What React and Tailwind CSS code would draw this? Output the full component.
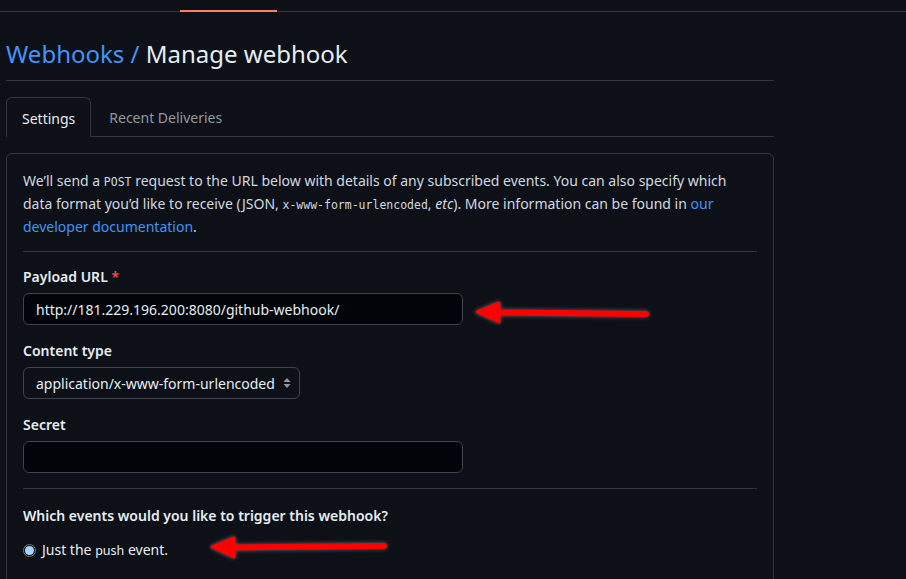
import React from 'react'

const font = { fontFamily: '"Noto Sans", "Liberation Sans", sans-serif' }
const mono = { fontFamily: '"DejaVu Sans Mono", monospace' }

function Arrow ({ x1, y1, x2, y2 }) {
  // tip at (x1,y1), tail at (x2,y2)
  const left = Math.min(x1, x2) - 14
  const top = Math.min(y1, y2) - 18
  const w = Math.abs(x2 - x1) + 28
  const h = Math.abs(y2 - y1) + 36
  const tx = x1 - left
  const ty = y1 - top
  const ex = x2 - left
  const ey = y2 - top
  return (
    <svg
      className="pointer-events-none absolute drop-shadow-[0_0_2px_rgba(255,255,255,0.35)]"
      style={{ left, top }}
      width={w}
      height={h}
    >
      <line x1={tx + 18} y1={ty + 0.5} x2={ex} y2={ey} stroke="#ff0000" strokeWidth="6" strokeLinecap="round" />
      <path
        d={`M${tx} ${ty} L${tx + 22} ${ty - 9} L${tx + 22} ${ty + 10} Z`}
        fill="#ff0000"
        stroke="#ff0000"
        strokeWidth="3"
        strokeLinejoin="round"
      />
    </svg>
  )
}

export default function App () {
  return (
    <div className="relative min-h-[579px] w-[906px] overflow-hidden bg-[#0d1117] text-[#e6edf3]" style={font}>
      <div className="relative h-[12px] border-b border-[#30363d]">
        <div className="absolute bottom-[-1px] left-[180px] h-[2px] w-[97px] bg-[#f78166]" />
      </div>

      <div className="w-[774px] pl-[6px]">
        <h1 className="mt-[26px] border-b border-[#30363d] pb-[10px] text-[24px] leading-[32px]">
          <span className="text-[#4493f8]">Webhooks /</span> Manage webhook
        </h1>

        <div className="mt-[16px] flex border-b border-[#30363d] text-[14px]">
          <div className="mb-[-1px] rounded-t-md border border-b-0 border-[#30363d] bg-[#0d1117] px-[15px] pt-[10px] pb-[7px] leading-[22px] text-[#e6edf3]">
            Settings
          </div>
          <div className="px-[18px] pt-[10px] pb-[7px] leading-[22px] text-[#9198a1]">Recent Deliveries</div>
        </div>

        <div className="mt-[16px] rounded-md border border-[#30363d] px-[16px] pt-[16px] pb-[20px] text-[14px]">
          <p className="border-b border-[#30363d] pb-[13px] leading-[22px] text-[#d1d7e0]">
            We’ll send a <code className="text-[11.5px]" style={mono}>POST</code> request to the URL below with details of any subscribed events. You can also specify which data format you’d like to receive (JSON, <code className="text-[11.5px]" style={mono}>x-www-form-urlencoded</code>, <em>etc</em>). More information can be found in <span className="text-[#4493f8]">our developer documentation</span>.
          </p>

          <div className="mt-[14px]">
            <label className="block text-[14px] font-semibold leading-[22px] text-[#e6edf3]">
              Payload URL <span className="text-[#f85149]">*</span>
            </label>
            <div className="mt-[5px] flex h-[32px] w-[440px] items-center rounded-md border border-[#3d444d] bg-[#010409] px-[12px] text-[14px] text-[#e6edf3]">
              http://181.229.196.200:8080/github-webhook/
            </div>
          </div>

          <div className="mt-[15px]">
            <label className="block text-[14px] font-semibold leading-[22px] text-[#e6edf3]">Content type</label>
            <div className="mt-[5px] flex h-[32px] w-[277px] items-center justify-between rounded-md border border-[#3d444d] bg-[#0d1117] pl-[12px] pr-[8px] text-[14px] text-[#e6edf3]">
              <span>application/x-www-form-urlencoded</span>
              <svg width="8" height="12" viewBox="0 0 8 12" className="text-[#9198a1]">
                <path d="M4 1 L7.5 5 H0.5 Z M4 11 L7.5 7 H0.5 Z" fill="currentColor" />
              </svg>
            </div>
          </div>

          <div className="mt-[15px] border-b border-[#30363d] pb-[15px]">
            <label className="block text-[14px] font-semibold leading-[22px] text-[#e6edf3]">Secret</label>
            <div className="mt-[5px] h-[32px] w-[440px] rounded-md border border-[#3d444d] bg-[#010409]" />
          </div>

          <div className="mt-[16px] text-[14px] font-semibold leading-[22px] text-[#e6edf3]">
            Which events would you like to trigger this webhook?
          </div>
          <div className="mt-[12px] flex items-center gap-[6px] text-[14px] leading-[22px] text-[#e6edf3]">
            <span className="flex h-[13px] w-[13px] items-center justify-center rounded-full border border-[#6e7681] bg-[#0d1117]">
              <span className="h-[9px] w-[9px] rounded-full bg-[#a5d6ff]" />
            </span>
            <span>
              Just the <span className="text-[12.5px]">push</span> event.
            </span>
          </div>
        </div>
      </div>

      <Arrow x1={477} y1={312} x2={646} y2={314} />
      <Arrow x1={212} y1={547} x2={384} y2={546} />
    </div>
  )
}
